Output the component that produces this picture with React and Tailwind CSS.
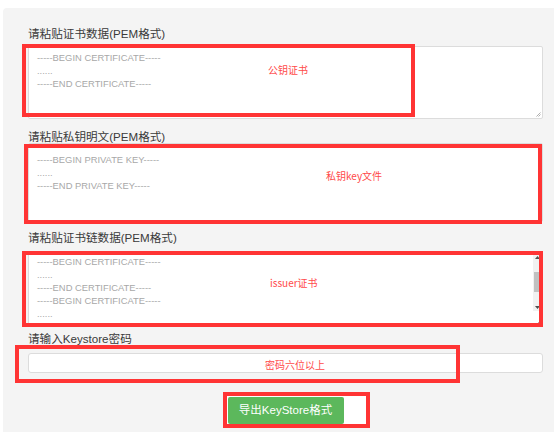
import React from 'react';

const label = "block text-[11.6px] leading-[13px] text-[#3a3a3a] font-['Liberation_Sans','Noto_Sans_CJK_SC',sans-serif]";
const pem = "text-[9.4px] leading-[13px] text-[#a8a8a8] font-['Liberation_Sans',sans-serif] whitespace-pre";
const note = "absolute text-[10px] leading-[12px] text-[#ff4a4a] font-['Noto_Sans_CJK_SC',sans-serif] whitespace-nowrap";

const Grip = () => (
    <svg className="absolute right-[1px] bottom-[1px]" width="6" height="6" viewBox="0 0 6 6">
        <path d="M5.5 1.5 L1.5 5.5 M5.5 3.5 L3.5 5.5" stroke="#9a9a9a" strokeWidth="0.8" />
    </svg>
);

const RedBox = ({ className }) => (
    <div className={`absolute border-[4px] border-[#ff3434] pointer-events-none ${className}`} />
);

const PemLines = ({ lines }) => lines.map((l, i) => <div key={i} className={pem}>{l}</div>);

const cert = ['-----BEGIN CERTIFICATE-----', '......', '-----END CERTIFICATE-----'];
const key = ['-----BEGIN PRIVATE KEY-----', '......', '-----END PRIVATE KEY-----'];

const App = () => {
    return (
        <div className="w-[554px] h-[432px] bg-white pt-[8px] pl-[3px] overflow-hidden">
            <div className="relative h-full bg-[#f4f4f4] rounded-tl-[4px] pl-[25px] pr-[11px] pt-[19px]">
                {/* 证书 */}
                <span className={label}>请粘贴证书数据(PEM格式)</span>
                <div className="relative mt-[6px] h-[73px] bg-white border border-[#dcdcdc] rounded-[2px] pl-[8px] pt-[4px]">
                    <PemLines lines={cert} />
                    <Grip />
                </div>

                {/* 私钥 */}
                <span className={`${label} mt-[11px]`}>请粘贴私钥明文(PEM格式)</span>
                <div className="h-[79px] bg-white border border-[#dcdcdc] rounded-[2px] pl-[8px] pt-[9px]">
                    <PemLines lines={key} />
                </div>

                {/* 证书链 */}
                <span className={`${label} mt-[9px]`}>请粘贴证书链数据(PEM格式)</span>
                <div className="mt-[8px] h-[75px] bg-white border border-[#dcdcdc] rounded-[2px] flex overflow-hidden">
                    <div className="flex-1 pl-[8px] pt-[2px] overflow-hidden">
                        <PemLines lines={[...cert, ...cert]} />
                    </div>
                    <div className="w-[9px] flex flex-col bg-[#f1f1f1]">
                        <div className="h-[8px] flex items-center justify-center">
                            <svg width="5" height="3" viewBox="0 0 5 3"><path d="M0 3 L2.5 0 L5 3 Z" fill="#505050" /></svg>
                        </div>
                        <div className="flex-1 pt-[11px] px-[1px]">
                            <div className="h-[20px] bg-[#c1c1c1]" />
                        </div>
                        <div className="h-[8px] flex items-center justify-center">
                            <svg width="5" height="3" viewBox="0 0 5 3"><path d="M0 0 L2.5 3 L5 0 Z" fill="#505050" /></svg>
                        </div>
                        <div className="relative h-[15px] bg-white">
                            <Grip />
                        </div>
                    </div>
                </div>

                {/* 密码 */}
                <span className={`${label} mt-[5px]`}>请输入Keystore密码</span>
                <div className="mt-[8px] h-[20px] bg-white border border-[#dcdcdc] rounded-[3px]" />

                <div className="mt-[24px] flex justify-center">
                    <button className="relative z-10 w-[116px] h-[27px] bg-[#5cb85c] rounded-[2px] text-white text-[11.5px] font-['Liberation_Sans','Noto_Sans_CJK_SC',sans-serif]">
                        导出KeyStore格式
                    </button>
                </div>

                {/* 标注 */}
                <RedBox className="left-[19px] top-[36px] w-[393px] h-[73px]" />
                <RedBox className="left-[21px] top-[136px] w-[518px] h-[80px]" />
                <RedBox className="left-[19px] top-[243px] w-[521px] h-[76px]" />
                <RedBox className="left-[12px] top-[337px] w-[445px] h-[38px]" />
                <RedBox className="left-[220px] top-[384px] w-[147px] h-[36px] bg-white" />

                <span className={`${note} left-[265px] top-[56px]`}>公钥证书</span>
                <span className={`${note} left-[323px] top-[162px]`}>私钥key文件</span>
                <span className={`${note} left-[267px] top-[269px]`}>issuer证书</span>
                <span className={`${note} left-[262px] top-[351px]`}>密码六位以上</span>
            </div>
        </div>
    );
};

export default App;
